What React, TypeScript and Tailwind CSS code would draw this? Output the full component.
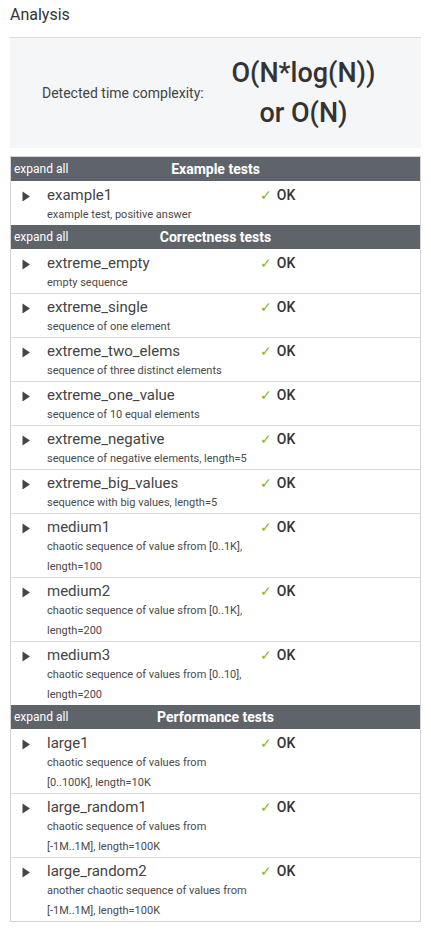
import React from "react";

type Test = { name: string; desc: string };
type Group = { title: string; tests: Test[] };

const GROUPS: Group[] = [
  {
    title: "Example tests",
    tests: [{ name: "example1", desc: "example test, positive answer" }],
  },
  {
    title: "Correctness tests",
    tests: [
      { name: "extreme_empty", desc: "empty sequence" },
      { name: "extreme_single", desc: "sequence of one element" },
      { name: "extreme_two_elems", desc: "sequence of three distinct elements" },
      { name: "extreme_one_value", desc: "sequence of 10 equal elements" },
      { name: "extreme_negative", desc: "sequence of negative elements, length=5" },
      { name: "extreme_big_values", desc: "sequence with big values, length=5" },
      { name: "medium1", desc: "chaotic sequence of value sfrom [0..1K], length=100" },
      { name: "medium2", desc: "chaotic sequence of value sfrom [0..1K], length=200" },
      { name: "medium3", desc: "chaotic sequence of values from [0..10], length=200" },
    ],
  },
  {
    title: "Performance tests",
    tests: [
      { name: "large1", desc: "chaotic sequence of values from [0..100K], length=10K" },
      { name: "large_random1", desc: "chaotic sequence of values from [-1M..1M], length=100K" },
      { name: "large_random2", desc: "another chaotic sequence of values from [-1M..1M], length=100K" },
    ],
  },
];

function Triangle() {
  return (
    <svg width="9" height="11" viewBox="0 0 9 11" aria-hidden>
      <path d="M0.5 0.5 L8 5.5 L0.5 10.5 Z" fill="#454545" />
    </svg>
  );
}

function TestRow({ test, first }: { test: Test; first: boolean }) {
  return (
    <div className={`flex ${first ? "pt-1" : "border-t border-[#dadada] pt-[3px]"}`}>
      <div className="flex h-5 w-9 flex-none items-center pl-[11px] pt-[2px]">
        <Triangle />
      </div>
      <div className="w-[213px] flex-none pr-2">
        <div className="text-[15px] leading-5 text-[#444]">{test.name}</div>
        <div className="text-[11px] leading-5 text-[#4a4a4a]">{test.desc}</div>
      </div>
      <div className="flex h-5 items-center gap-[5px] text-[14px]">
        <span className="text-[14px] text-[#7cb342]" style={{ fontFamily: "'DejaVu Sans', sans-serif" }}>
          ✓
        </span>
        <span className="font-medium text-[#333]">OK</span>
      </div>
    </div>
  );
}

function GroupHeader({ title }: { title: string }) {
  return (
    <div className="relative flex h-6 items-center bg-[#5f646b] text-white">
      <span className="absolute left-[3px] text-[12px] leading-6">expand all</span>
      <span className="w-full text-center text-[14px] font-bold leading-6">{title}</span>
    </div>
  );
}

export default function App() {
  return (
    <div className="min-h-screen bg-white px-[10px] pb-3 text-[#333]" style={{ fontFamily: "Roboto, 'Noto Sans', sans-serif" }}>
      <h2 className="pt-[5px] text-[16px] leading-5 text-[#333]">Analysis</h2>

      <div className="mt-3 flex h-[111px] items-center border-t border-[#dcdcdc] bg-[#f5f6f8]">
        <div className="w-[194px] flex-none pl-[32px] text-[14px] text-[#444]">Detected time complexity:</div>
        <div className="flex-1 pr-[18px] text-center text-[27px] font-medium leading-10 text-[#333]">
          O(N*log(N))
          <br />
          or O(N)
        </div>
      </div>

      <div className="mt-2 border border-[#d4d4d4]">
        {GROUPS.map((g) => (
          <div key={g.title}>
            <GroupHeader title={g.title} />
            {g.tests.map((t, i) => (
              <TestRow key={t.name} test={t} first={i === 0} />
            ))}
          </div>
        ))}
      </div>
    </div>
  );
}
